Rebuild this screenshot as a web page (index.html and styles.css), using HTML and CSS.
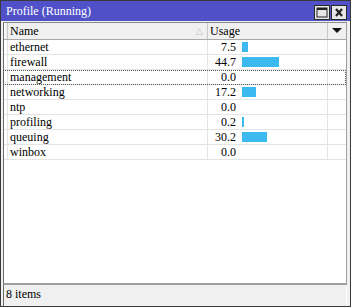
FILE: index.html
```html
<!DOCTYPE html>
<html lang="en">
<head>
  <meta charset="UTF-8" />
  <title>Profile (Running)</title>
  <link rel="stylesheet" href="styles.css">
</head>
<body>

  <div class="window">
    <div class="titlebar">
      <span class="title">Profile (Running)</span>
      <div class="buttons">
        <span class="btn">
          <svg width="12" height="11" viewBox="0 0 12 11"><rect x="1" y="1" width="10" height="9" fill="none" stroke="#222" stroke-width="1"/><rect x="1" y="1" width="10" height="2" fill="#222"/></svg>
        </span>
        <span class="btn">
          <svg width="12" height="11" viewBox="0 0 12 11"><path d="M3 2 L9 9 M9 2 L3 9" stroke="#222" stroke-width="2.2"/></svg>
        </span>
      </div>
    </div>

    <div class="list">
      <div class="row head">
        <span class="cell flag"></span>
        <span class="cell name">Name <span class="sort">&#9651;</span></span>
        <span class="cell usage">Usage</span>
        <span class="cell more">
          <svg width="10" height="6" viewBox="0 0 10 6"><path d="M0 0 H10 L5 5 Z" fill="#111"/></svg>
        </span>
      </div>
      <div id="rows"></div>
    </div>

    <div class="status">8 items</div>
  </div>

  <script>
    const items = [
      ['ethernet', 7.5],
      ['firewall', 44.7],
      ['management', 0.0],
      ['networking', 17.2],
      ['ntp', 0.0],
      ['profiling', 0.2],
      ['queuing', 30.2],
      ['winbox', 0.0]
    ];
    const rows = document.getElementById('rows');

    items.forEach(([name, val]) => {
      const row = document.createElement('div');
      row.className = 'row' + (name === 'management' ? ' focus' : '');
      const w = Math.round(val * 0.83);
      const bar = val > 0 ? `<span class="bar" style="width:${Math.max(w, 2)}px"></span>` : '';
      row.innerHTML = `
        <span class="cell flag"></span>
        <span class="cell name">${name}</span>
        <span class="cell usage"><span class="num">${val.toFixed(1)}</span>${bar}</span>
        <span class="cell more"></span>`;
      rows.appendChild(row);
    });
  </script>

</body>
</html>
```

FILE: styles.css
```css
* {
  box-sizing: border-box;
  margin: 0;
  padding: 0;
}

body {
  width: 351px;
  height: 307px;
  font-family: "Liberation Serif", "Times New Roman", serif;
  font-size: 12px;
  color: #000;
  background: #f0f0f0;
}

.window {
  width: 351px;
  height: 307px;
  border: 1px solid #3a3a3a;
  background: #f0f0f0;
  display: flex;
  flex-direction: column;
}

.titlebar {
  height: 20px;
  background: #5050c8;
  color: #fff;
  display: flex;
  align-items: center;
  justify-content: space-between;
  padding: 0 3px 0 5px;
  font-size: 12px;
}

.buttons {
  display: flex;
  gap: 1px;
  margin-top: 2px;
}

.btn {
  width: 16px;
  height: 15px;
  background: #e6e6e6;
  border: 1px solid #2a2a2a;
  display: flex;
  align-items: center;
  justify-content: center;
}

.list {
  flex: 1;
  margin: 1px 3px 0 2px;
  background: #fff;
  border-top: 1px solid #8a8a8a;
  border-left: 1px solid #6a6a6a;
  border-right: 1px solid #a0a0a0;
  border-bottom: 2px solid #a0a0a0;
}

.row {
  display: grid;
  grid-template-columns: 4px 200px 120px 1fr;
  height: 15px;
  line-height: 14px;
  border-bottom: 1px solid #e4e4e4;
}

.row.focus {
  outline: 1px dotted #555;
  outline-offset: -1px;
  margin-left: -1px;
  padding-left: 1px;
}

.cell {
  border-right: 1px solid #e4e4e4;
  white-space: nowrap;
  overflow: hidden;
}

.cell.more {
  border-right: none;
}

.name {
  padding-left: 2px;
}

.usage {
  display: flex;
  align-items: center;
}

.num {
  width: 28px;
  text-align: right;
}

.bar {
  height: 10px;
  margin-left: 6px;
  background: #3cb9ee;
}

.row.head {
  height: 17px;
  line-height: 16px;
  background: #f0f0f0;
  border-bottom: 1px solid #a8a8a8;
}

.head .cell {
  border-right: 1px solid #c8c8c8;
}

.head .flag {
  border-left: 1px solid #fff;
}

.head .name {
  display: flex;
  justify-content: space-between;
  padding-right: 4px;
}

.sort {
  color: #c0c0c0;
  font-size: 9px;
}

.head .usage {
  padding-left: 2px;
}

.head .more {
  border-right: none;
  display: flex;
  align-items: center;
  justify-content: center;
}

.status {
  height: 21px;
  line-height: 19px;
  margin: 0 3px 0 2px;
  padding-left: 2px;
  border-left: 1px solid #6a6a6a;
  border-right: 1px solid #fafafa;
}
```
